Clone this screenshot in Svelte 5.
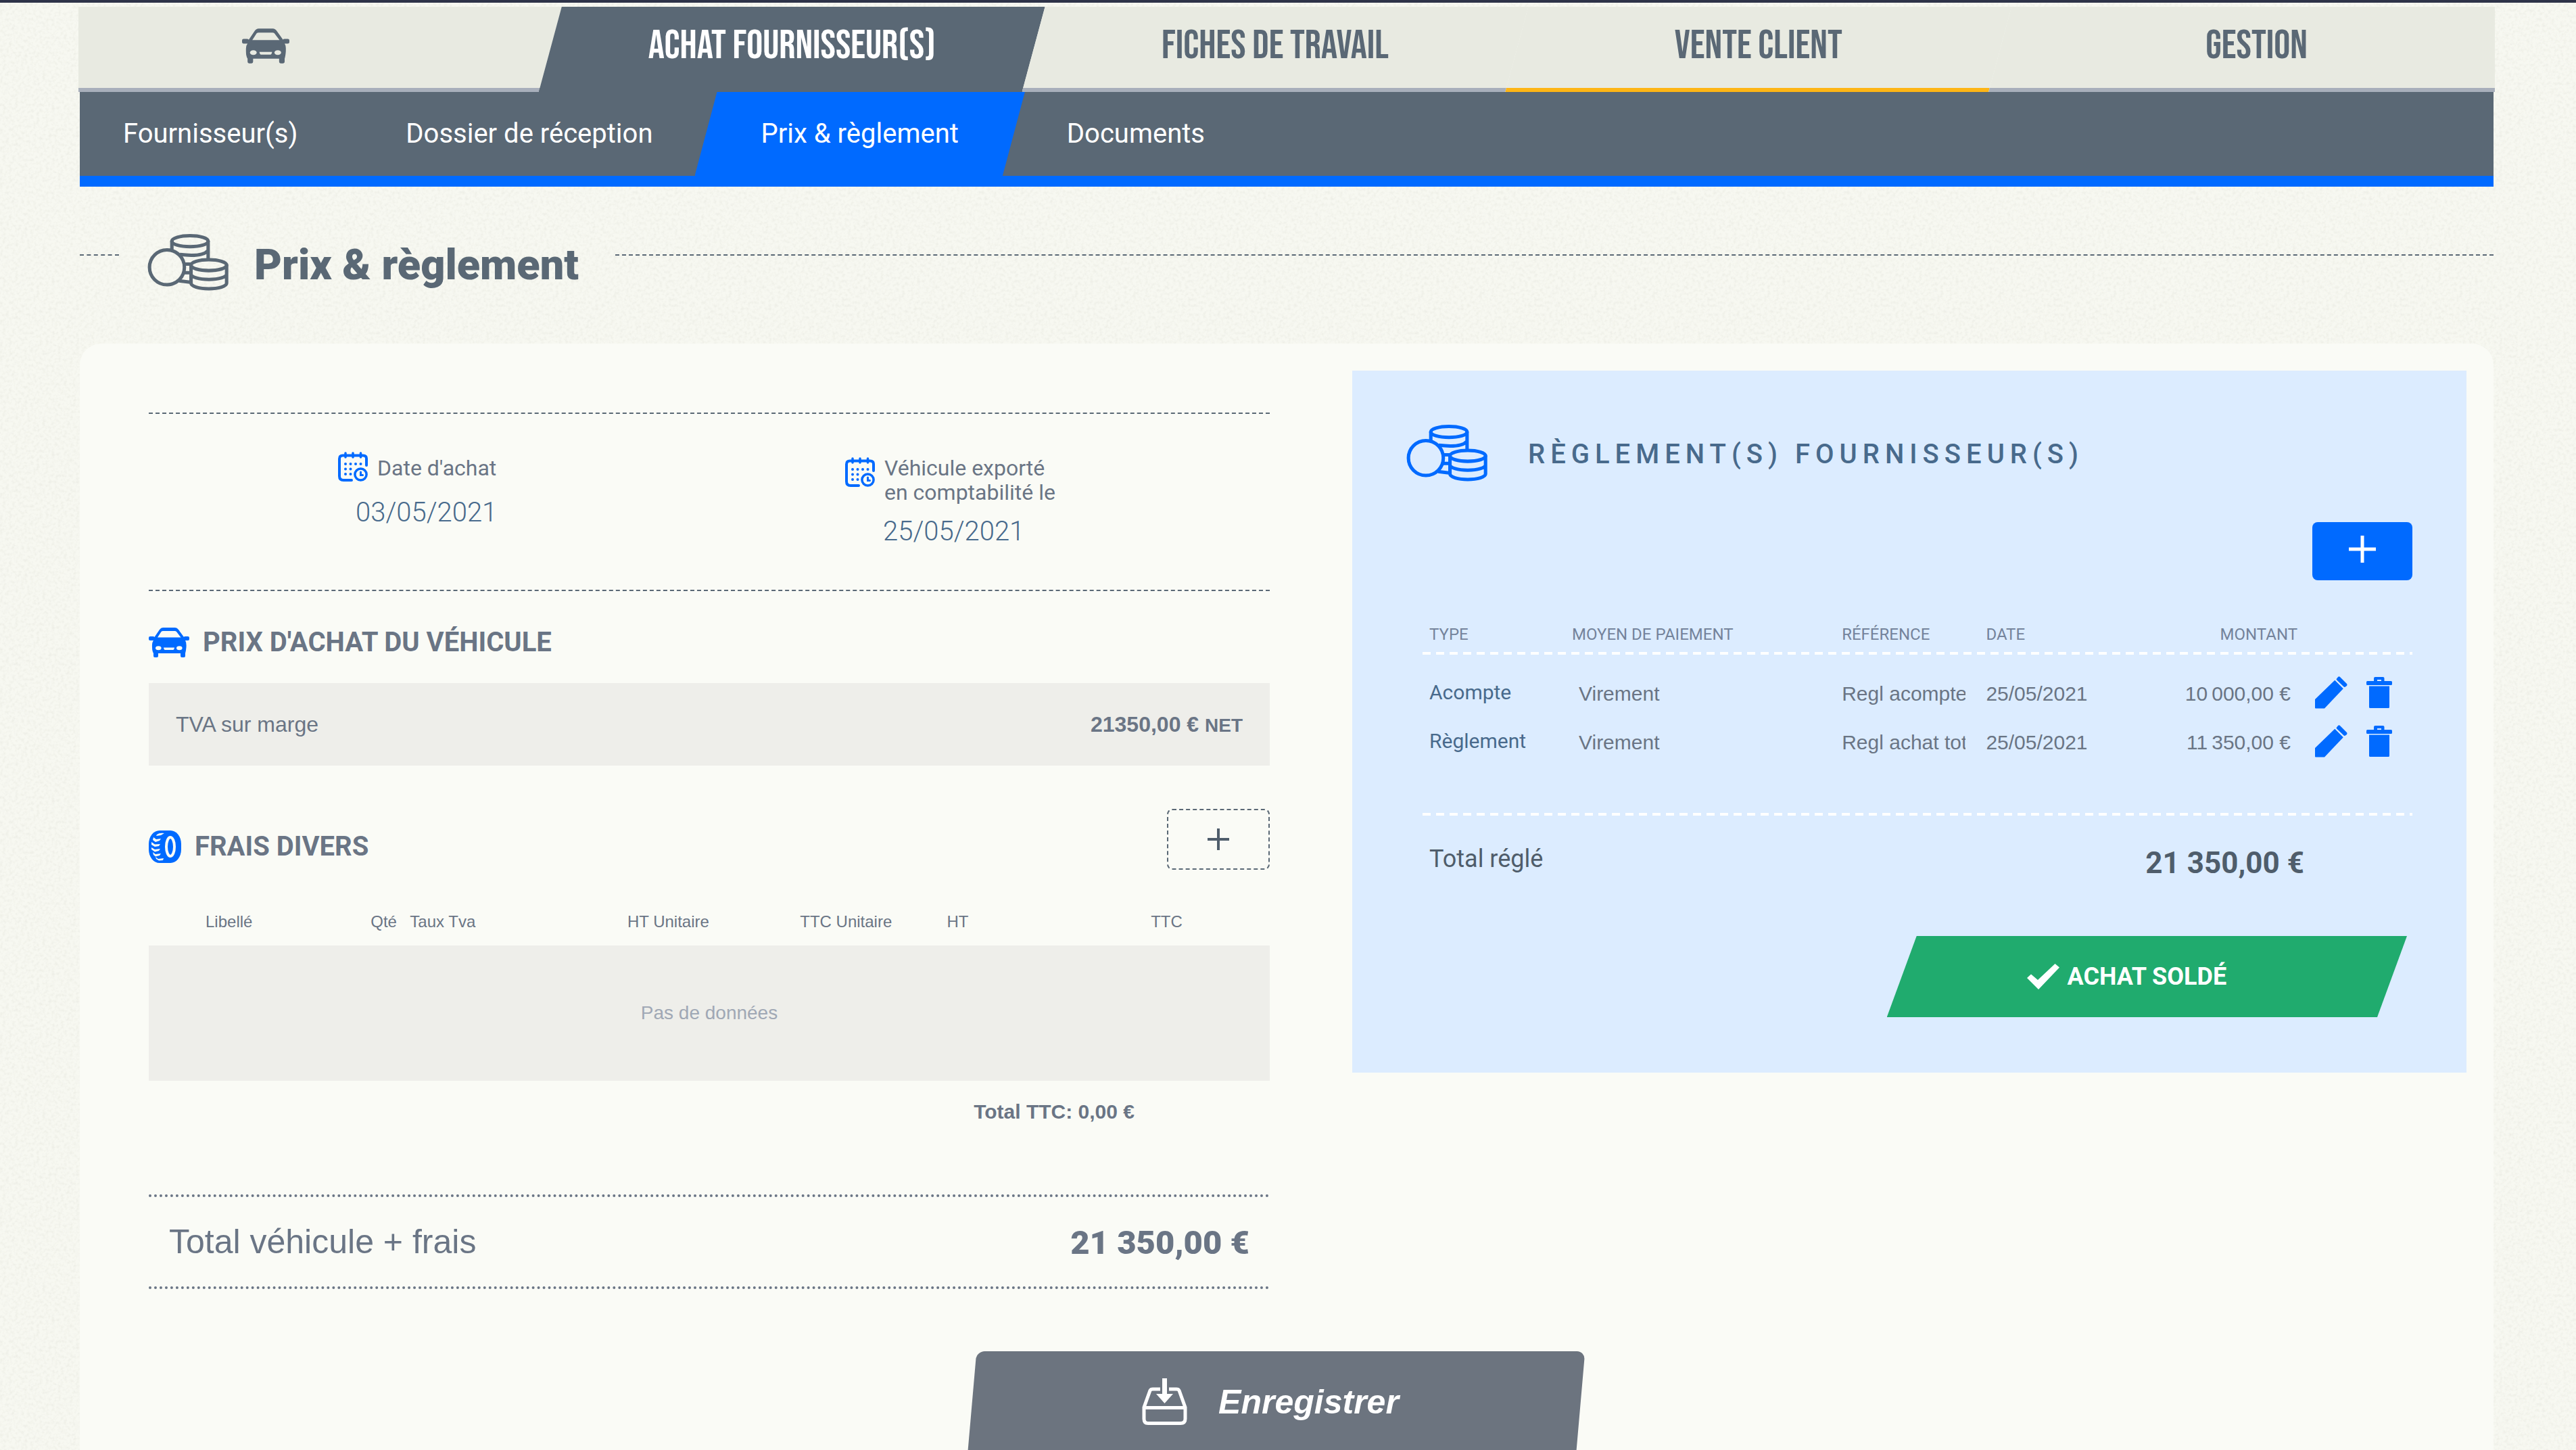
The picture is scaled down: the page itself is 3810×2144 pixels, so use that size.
<script>
  const subNav = ['Fournisseur(s)', 'Dossier de réception', 'Prix & règlement', 'Documents'];
  const tabs = ['ACHAT FOURNISSEUR(S)', 'FICHES DE TRAVAIL', 'VENTE CLIENT', 'GESTION'];
  const feeColumns = ['Libellé', 'Qté', 'Taux Tva', 'HT Unitaire', 'TTC Unitaire', 'HT', 'TTC'];
  const payments = [
    { type: 'Acompte', mode: 'Virement', ref: 'Regl acompte', date: '25/05/2021', amount: '10\u202f000,00 €' },
    { type: 'Règlement', mode: 'Virement', ref: 'Regl achat total', date: '25/05/2021', amount: '11\u202f350,00 €' }
  ];
</script>

{#snippet car()}
  <svg class="car" viewBox="0 0 60 44" aria-hidden="true">
    <path fill="currentColor" fill-rule="evenodd" d="M8.5 14 16 3Q18 0 21 0H39Q42 0 44 3L52 14Q52 13 54 13H58Q60 13 60 15V17Q60 19 58 19H54Q56 22 55.500 29Q55 35 54 38V42Q54 44 52 44H49Q47 44 47 42V38H14V42Q14 44 12 44H9Q7 44 7 42V38Q5 35 5 29Q4.500 22 7 19H2Q0 19 0 17V15Q0 13 2 13H6Q8 13 8.500 14ZM13 14.500H47.500L41 6Q40 5 38.500 5H21Q19.500 5 18.500 6ZM10 30.300a4.300 3 0 1 0 8.600 0a4.300 3 0 1 0-8.600 0ZM41 30.300a4.300 3 0 1 0 8.600 0a4.300 3 0 1 0-8.600 0ZM22 29.500H38Q37.500 33 36 33H24Q22.500 33 22 29.500Z" />
  </svg>
{/snippet}

{#snippet coins()}
  <svg class="coins" viewBox="0 0 118 83" fill="none" stroke="currentColor" stroke-width="5" aria-hidden="true">
    <circle cx="28.300" cy="48.700" r="25.500" />
    <ellipse cx="62" cy="10.500" rx="26.500" ry="8" />
    <path d="M35.500 10V24M88.500 10V37M47 30Q80 34 88.500 24M54 44H64M54 56.500H64M46 68.500 62 70.500" />
    <ellipse cx="89.500" cy="45.500" rx="26" ry="8" />
    <path d="M63.500 45V72A26 8 0 0 0 115.500 72V45M63.500 58.500A26 8 0 0 0 115.500 58.500" />
  </svg>
{/snippet}

{#snippet calendar()}
  <svg class="cal" viewBox="0 0 44 44" fill="none" stroke="currentColor" stroke-width="4" stroke-linecap="round" aria-hidden="true">
    <path d="M42 20V10Q42 5.500 37 5.500H7Q2 5.500 2 10.500V36Q2 42 8 42H20" />
    <path stroke-width="3.500" d="M11 2V8M22 2V8M33.500 2V8" />
    <path d="M11 18h.01M18.500 18h.01M26 18h.01M33.500 18h.01M11 25.500h.01M18.500 25.500h.01M11 33h.01M18.500 33h.01" />
    <circle cx="33.500" cy="33.500" r="8.600" stroke-width="3.500" />
    <path stroke-width="3" d="M33.500 30V34.500H36.500" />
  </svg>
{/snippet}

<div class="page">
  <header>
    <nav class="tabs" aria-label="Sections">
      <a href="#vehicule" aria-label="Véhicule">{@render car()}</a>
      {#each tabs as tab, i}
        <a href="#{tab}" class:active={i === 0} class:pending={i === 2}>{tab}</a>
      {/each}
    </nav>
    <nav class="subnav" aria-label="Sous-sections">
      {#each subNav as item, i}
        <a href="#{item}" class:active={i === 2}>{item}</a>
      {/each}
    </nav>
  </header>

  <div class="title">
    <span class="dash lead"></span>
    {@render coins()}
    <h1>Prix &amp; règlement</h1>
    <span class="dash rest"></span>
  </div>

  <main>
    <div class="columns">
      <section class="left">
        <div class="dates">
          <div class="date">
            <div class="date-label">{@render calendar()}<span>Date d'achat</span></div>
            <time>03/05/2021</time>
          </div>
          <div class="date export">
            <div class="date-label">{@render calendar()}<span>Véhicule exporté<br />en comptabilité le</span></div>
            <time>25/05/2021</time>
          </div>
        </div>

        <h2 class="price-head">{@render car()}PRIX D'ACHAT DU VÉHICULE</h2>
        <div class="price-row">
          <span>TVA sur marge</span>
          <strong>21350,00 € <small>NET</small></strong>
        </div>

        <div class="fees-head">
          <h2>
            <svg class="tire" viewBox="0 0 48 48" aria-hidden="true">
              <rect width="48" height="48" rx="16" ry="20" fill="currentColor" />
              <ellipse cx="32" cy="24" rx="6" ry="14" fill="none" stroke="#fafbf6" stroke-width="4" />
              <path fill="#fafbf6" d="M12 6Q16 3 23 4L18 7L11 8ZM7 10 11 13 18 12 16 15 10 17 6 14ZM4 17 9 20.500 17 20 15 23 9 24 4 21ZM4 25 9 28 17 27 15 30 9 31.500 4 28ZM6 32 10 35 18 34 16 37 10 38.500 7 36ZM10 39 14 42 22 41 21 44 15 44.500 11 42Z" />
            </svg>
            FRAIS DIVERS
          </h2>
          <button class="add-fee" aria-label="Ajouter un frais">
            <svg viewBox="0 0 32 32" aria-hidden="true"><path d="M16 0V32M0 16H32" stroke="currentColor" stroke-width="4" /></svg>
          </button>
        </div>

        <table class="fees">
          <thead>
            <tr>{#each feeColumns as col}<th>{col}</th>{/each}</tr>
          </thead>
          <tbody>
            <tr><td colspan="7">Pas de données</td></tr>
          </tbody>
        </table>
        <p class="fees-total">Total TTC: 0,00 €</p>

        <div class="grand-total">
          <span>Total véhicule + frais</span>
          <strong>21 350,00 €</strong>
        </div>
      </section>

      <section class="panel">
        <h2>{@render coins()}<span>RÈGLEMENT(S) FOURNISSEUR(S)</span></h2>
        <button class="add-payment" aria-label="Ajouter un règlement">
          <svg viewBox="0 0 40 40" aria-hidden="true"><path d="M20 0V40M0 20H40" stroke="currentColor" stroke-width="5" /></svg>
        </button>
        <div class="payments-wrap">
          <table class="payments">
            <thead>
              <tr>
                <th>TYPE</th><th>MOYEN DE PAIEMENT</th><th>RÉFÉRENCE</th><th>DATE</th><th class="num">MONTANT</th><th aria-label="Actions"></th>
              </tr>
            </thead>
            <tbody>
              {#each payments as p}
                <tr>
                  <td class="type">{p.type}</td>
                  <td><select aria-label="Moyen de paiement"><option>{p.mode}</option></select></td>
                  <td class="ref"><input aria-label="Référence" value={p.ref} /></td>
                  <td><input aria-label="Date" value={p.date} /></td>
                  <td><input class="amount" aria-label="Montant" value={p.amount} /></td>
                  <td>
                    <div class="actions">
                      <button aria-label="Modifier">
                        <svg width="48" height="48" viewBox="0 0 48 48" aria-hidden="true">
                          <path fill="currentColor" d="M0 34 29 6Q30 5 31 6L41.500 16.500Q42.500 17.500 41.500 18.500L14 47.500H1Q0 47.500 0 46.500ZM32 3.500 34 1Q35.500-.5 37 1L47 11Q48 12.500 47 14L45 15.500Q43.500 16.500 42 15L32.500 6Q31 5 32 3.500Z" />
                          <path stroke="#dcecff" stroke-width="2" d="M29.500 4.500 43.500 18.500" />
                        </svg>
                      </button>
                      <button aria-label="Supprimer">
                        <svg width="38" height="46" viewBox="0 0 38 46" aria-hidden="true">
                          <path fill="currentColor" fill-rule="evenodd" d="M11 6V2Q11 0 13 0H24.500Q26.500 0 26.500 2V6H36.500Q38 6 38 7.500V10.500Q38 12 36.500 12H1.500Q0 12 0 10.500V7.500Q0 6 1.500 6ZM16 4V6H22V4ZM4 13.500H34V44.500Q34 46 32.500 46H5.500Q4 46 4 44.500Z" />
                        </svg>
                      </button>
                    </div>
                  </td>
                </tr>
              {/each}
            </tbody>
          </table>
          <div class="paid">
            <span>Total réglé</span>
            <strong>21 350,00 €</strong>
          </div>
        </div>
        <div class="settled">
          <svg viewBox="0 0 48 38" aria-hidden="true"><path fill="currentColor" d="M0 21 6 15.500 16 24 41.500 0 48 5.500 17 38Z" /></svg>
          ACHAT SOLDÉ
        </div>
      </section>
    </div>

    <button class="save">
      <svg viewBox="0 0 67 70" fill="none" stroke="currentColor" stroke-width="5" aria-hidden="true">
        <path d="M27 16H16Q13 16 12 18L3 43V60Q3 66.500 9 66.500H57Q64 66.500 64 60V43L55 18Q54 16 51 16H40M3 43.500H64" />
        <path fill="currentColor" stroke="none" d="M30 0H37V23H46L33.500 37 21 23H30Z" />
      </svg>
      Enregistrer
    </button>
  </main>
</div>

<style>
  :global(body) {
    margin: 0;
    background-color: #f7f8f1;
    background-image: url("data:image/svg+xml,%3Csvg xmlns='http://www.w3.org/2000/svg' width='256' height='256'%3E%3Cfilter id='n'%3E%3CfeTurbulence type='fractalNoise' baseFrequency='.22' numOctaves='2' stitchTiles='stitch'/%3E%3CfeColorMatrix values='0 0 0 0 .62 0 0 0 0 .62 0 0 0 0 .55 .5 0 0 0 -.21'/%3E%3C/filter%3E%3Crect width='256' height='256' filter='url(%23n)'/%3E%3C/svg%3E");
  }
  .page {
    --slate: #5a6875;
    --grey: #6a7585;
    --blue: #006aff;
    --navy: #486a8c;
    box-sizing: border-box;
    min-height: 100vh;
    padding: 6px 120px 0 116px;
    border-top: 4px solid #2e3348;
    display: flex;
    flex-direction: column;
    font-family: "Liberation Sans", Arial, sans-serif;
    color: var(--grey);
    overflow: hidden;
  }
  svg { display: block; flex: none; }
  a { text-decoration: none; }
  button { font: inherit; border: 0; padding: 0; cursor: pointer; }
  h1, h2, p { margin: 0; }

  .tabs { display: grid; grid-template-columns: repeat(5, 1fr); }
  .tabs a {
    box-sizing: border-box;
    height: 126px;
    margin-left: -34px;
    padding-bottom: 4px;
    border-bottom: 6px solid #a8afbb;
    background: #e8eae1;
    color: var(--slate);
    clip-path: polygon(34px 0, 100% 0, calc(100% - 34px) 100%, 0 100%);
    display: flex;
    align-items: center;
    justify-content: center;
    font: 60px/60px "Bebas Neue", "Roboto Condensed", Roboto, sans-serif;
  }
  .tabs a:first-child {
    margin-left: 0;
    padding-right: 160px;
    clip-path: polygon(0 0, 100% 0, calc(100% - 34px) 100%, 0 100%);
  }
  .tabs a:last-child {
    padding-left: 44px;
    clip-path: polygon(34px 0, 100% 0, 100% 100%, 0 100%);
  }
  .tabs a.active { background: var(--slate); border-color: var(--slate); color: #fff; }
  .tabs a.pending { border-color: #fdb515; }
  .tabs .car { width: 70px; height: 52px; }

  .subnav {
    display: flex;
    margin: 0 2px;
    padding-left: 2px;
    background: var(--slate);
    border-bottom: 16px solid var(--blue);
  }
  .subnav a {
    height: 124px;
    padding: 0 98px;
    margin-left: -36px;
    font: 40px/124px Roboto, sans-serif;
    color: #fff;
  }
  .subnav a.active {
    background: var(--blue);
    clip-path: polygon(33px 0, 100% 0, calc(100% - 33px) 100%, 0 100%);
  }

  .title {
    display: flex;
    align-items: center;
    height: 232px;
    margin: 0 2px;
    color: var(--slate);
  }
  .coins { width: 120px; height: 84px; }
  .title .coins { margin: 0 38px 8px 42px; }
  .title h1 { font: 900 63px/76px Roboto, sans-serif; margin-right: 54px; }
  .dash { border-top: 2px dashed var(--slate); margin-bottom: 30px; }
  .lead { width: 58px; }
  .rest { flex: 1; }

  main {
    flex: 1;
    margin: 0 2px;
    padding: 40px 40px 0 102px;
    border-radius: 32px 32px 0 0;
    background: #fafbf6;
    display: flex;
    flex-direction: column;
  }
  .columns {
    display: grid;
    grid-template-columns: 1658fr 1648fr;
    column-gap: 122px;
    align-items: start;
  }
  .left { padding-top: 62px; }

  .dates {
    display: grid;
    grid-template-columns: 750fr 628fr;
    box-sizing: border-box;
    height: 264px;
    padding: 56px 0 0 280px;
    border-top: 2px dashed var(--slate);
    border-bottom: 2px dashed var(--slate);
  }
  .date-label { display: flex; gap: 14px; font: 32px/36px Roboto, sans-serif; }
  .date-label span { padding-top: 6px; }
  .cal { width: 44px; height: 44px; color: var(--blue); }
  .export .cal { margin-top: 8px; }
  .date time {
    display: block;
    margin: 22px 0 0 26px;
    font: 300 40px/48px Roboto, sans-serif;
    color: var(--navy);
  }
  .export time { margin: 16px 0 0 56px; }

  .left h2 {
    display: flex;
    align-items: center;
    gap: 20px;
    font: bold 40px/48px Roboto, sans-serif;
  }
  .left h2 svg { color: var(--blue); }
  .left .price-head { margin: 52px 0 36px; }
  .left .car { width: 60px; height: 44px; }
  .price-row {
    display: flex;
    align-items: center;
    justify-content: space-between;
    height: 122px;
    padding: 0 40px;
    background: #eeeeea;
    font-size: 32px;
  }
  .price-row small { font-size: 28px; }
  .fees-head {
    display: flex;
    justify-content: space-between;
    margin-top: 64px;
  }
  .fees-head h2 { margin-top: 22px; }
  .tire { width: 48px; height: 48px; }
  .add-fee {
    width: 152px;
    height: 90px;
    border: 2px dashed var(--slate);
    border-radius: 8px;
    background: none;
    color: #4f5d6b;
    display: grid;
    place-items: center;
  }
  .add-fee svg { width: 32px; height: 32px; }

  .fees { width: 100%; table-layout: fixed; border-collapse: collapse; margin-top: 42px; }
  .fees th { height: 70px; padding: 0; font-size: 24px; font-weight: normal; text-align: left; }
  .fees th:nth-child(1) { width: 19.800%; text-indent: 84px; }
  .fees th:nth-child(2) { width: 3.500%; }
  .fees th:nth-child(3) { width: 19.400%; }
  .fees th:nth-child(4) { width: 15.400%; }
  .fees th:nth-child(5) { width: 13.100%; }
  .fees th:nth-child(6) { width: 18.200%; }
  .fees td {
    height: 200px;
    padding: 0;
    background: #eeeeea;
    text-align: center;
    font-size: 28px;
    color: #a0a8b5;
  }
  .fees-total { margin: 28px 200px 0 0; text-align: right; font: bold 30px/36px "Liberation Sans", sans-serif; }

  .grand-total {
    display: flex;
    align-items: center;
    justify-content: space-between;
    height: 132px;
    margin-top: 104px;
    padding: 0 30px;
    border-top: 4px dotted var(--grey);
    border-bottom: 4px dotted var(--grey);
    font-size: 50px;
  }
  .grand-total strong { font: 900 49px/60px Roboto, sans-serif; padding-top: 4px; }

  .panel {
    padding: 80px 80px 82px;
    background: #dcecff;
    display: flex;
    flex-direction: column;
  }
  .panel h2 {
    display: flex;
    align-items: center;
    gap: 60px;
    font: 500 40px/80px Roboto, sans-serif;
    letter-spacing: 8px;
    color: var(--navy);
  }
  .panel h2 span { padding-top: 4px; }
  .panel .coins { color: var(--blue); }
  .add-payment {
    align-self: flex-end;
    box-sizing: border-box;
    width: 148px;
    height: 86px;
    margin-top: 60px;
    padding-bottom: 6px;
    border-radius: 8px;
    background: var(--blue);
    color: #fff;
    display: grid;
    place-items: center;
  }
  .add-payment svg { width: 40px; height: 40px; }
  .payments-wrap { margin: 52px 0 0 24px; }
  .payments { width: 100%; table-layout: fixed; border-collapse: collapse; }
  .payments thead tr,
  .paid {
    background: repeating-linear-gradient(90deg, #fff 0 12px, transparent 12px 20px) no-repeat;
    background-size: 100% 4px;
  }
  .payments thead tr { background-position: 0 100%; }
  .payments th {
    height: 56px;
    padding: 0 10px 2px;
    font: 24px/28px Roboto, sans-serif;
    text-align: left;
    color: #74839b;
  }
  .payments th.num { text-align: right; }
  .payments th:nth-child(1) { width: 191px; }
  .payments th:nth-child(2) { width: 25.900%; }
  .payments th:nth-child(3) { width: 13.200%; }
  .payments th:nth-child(4) { width: 11.700%; }
  .payments th:nth-child(6) { width: 160px; padding: 0; }
  .payments tbody::before { content: ""; display: block; height: 22px; }
  .payments td { height: 72px; padding: 0 10px; font-size: 30px; }
  .payments td.type { font: 30px/36px Roboto, sans-serif; padding-bottom: 4px; height: 68px; color: var(--navy); }
  .payments td.ref { padding-right: 20px; }
  .payments input,
  .payments select {
    display: block;
    box-sizing: border-box;
    width: 100%;
    height: 70px;
    padding: 0;
    border: 0;
    background: none;
    appearance: none;
    font: 30px/36px "Liberation Sans", sans-serif;
    color: var(--grey);
  }
  .payments select { padding-left: 10px; }
  .payments .amount { padding-right: 10px; text-align: right; }
  .payments .actions { display: flex; align-items: center; gap: 28px; padding: 0 0 4px 6px; }
  .payments button { background: none; color: var(--blue); }
  .paid {
    display: flex;
    align-items: flex-start;
    justify-content: space-between;
    margin-top: 68px;
    padding: 46px 160px 0 10px;
    font: 36px/44px Roboto, sans-serif;
    color: #4f5d6b;
  }
  .paid strong { font-size: 44px; line-height: 56px; font-weight: bold; }
  .settled {
    align-self: flex-end;
    display: flex;
    align-items: center;
    justify-content: center;
    gap: 12px;
    box-sizing: border-box;
    width: 51.700%;
    height: 120px;
    margin: 80px 8px 0 0;
    padding-right: 60px;
    background: #20ab6e;
    clip-path: polygon(44px 0, 100% 0, calc(100% - 44px) 100%, 0 100%);
    color: #fff;
    font: bold 36px/44px Roboto, sans-serif;
  }
  .settled svg { width: 48px; height: 38px; }

  .save {
    position: relative;
    z-index: 0;
    align-self: center;
    display: flex;
    align-items: center;
    justify-content: center;
    gap: 46px;
    box-sizing: border-box;
    width: 900px;
    height: 146px;
    margin: 92px 92px 0 0;
    padding: 4px 18px 0 0;
    background: none;
    color: #fff;
    font: italic bold 50px/60px "Liberation Sans", sans-serif;
  }
  .save::before {
    content: "";
    position: absolute;
    inset: 0;
    z-index: -1;
    border-radius: 12px 12px 0 0;
    background: #6c747f;
    transform: skewX(-5deg);
  }
  .save svg { width: 67px; height: 70px; }
</style>
